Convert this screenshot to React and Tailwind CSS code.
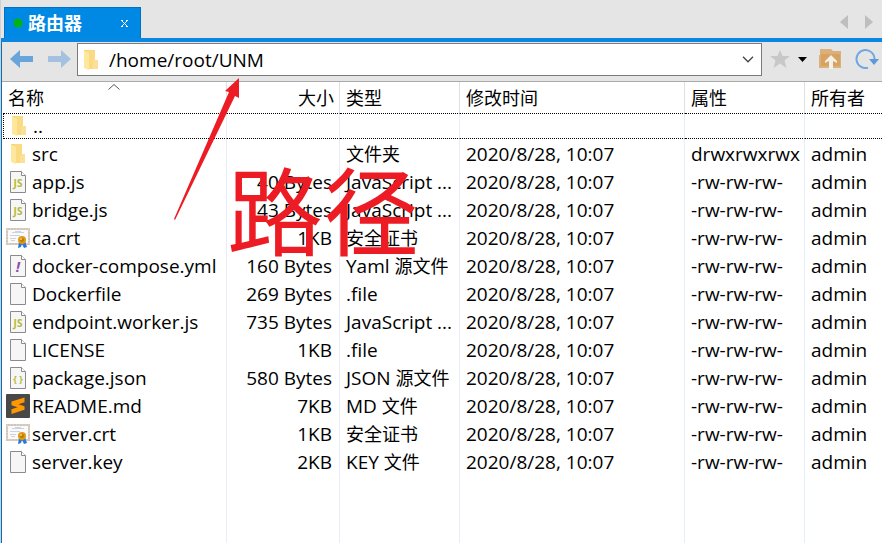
import React from "react";

function FolderIcon() {
  return (
    <svg width="16" height="20" viewBox="0 0 16 20" aria-hidden="true">
      <path d="M1 0h11v18H1z" fill="#f5d067" />
      <path d="M4 0h8v10h3v9H4z" fill="#fadb84" />
      <path d="M1 0l5 3v17l-5-2z" fill="#ffe79e" />
      <path d="M10 11l2-1h3v9h-5z" fill="#fbe197" />
    </svg>
  );
}

function PageIcon({ mark, color }) {
  return (
    <svg width="18" height="22" viewBox="0 0 18 22" aria-hidden="true">
      <path d="M1.500.5h11l4 4v17h-15z" fill="#f6f6f6" stroke="#8b8b8b" />
      <path d="M12.500.5v4h4" fill="#fff" stroke="#8b8b8b" />
      {mark && (
        <text
          x="9"
          y={mark === "!" ? 17 : mark === "JS" ? 16 : 15}
          textAnchor="middle"
          fill={color}
          fontSize={mark === "!" ? 15 : mark === "JS" ? 10 : 9}
          fontWeight="700"
          fontStyle={mark === "!" ? "italic" : "normal"}
          fontFamily="Open Sans, sans-serif"
        >
          {mark}
        </text>
      )}
    </svg>
  );
}

function CertIcon() {
  return (
    <svg width="24" height="22" viewBox="0 0 24 22" aria-hidden="true">
      <path d="M1 2h22v15H1z" fill="#fafafa" stroke="#d3c6b6" strokeWidth="2" />
      <path d="M1 2h22v15H1z" fill="none" stroke="#e8e0d6" strokeWidth="1" strokeDasharray="1 2" />
      <path d="M6 5.500h12M9 4.500h6" stroke="#c5d4e6" />
      <path d="M4 8.500h10M4 11.500h6M5 13.500h4" stroke="#cfd2da" />
      <path d="M13 15l-1 6 3-1 1-3 2 4 3-1-2-6z" fill="#2778d8" />
      <circle cx="16" cy="13" r="4" fill="#e09a12" />
      <circle cx="16" cy="13" r="2" fill="#b97a12" />
      <circle cx="15" cy="12" r="1" fill="#f8cf62" />
    </svg>
  );
}

function SublimeIcon() {
  return (
    <svg width="24" height="24" viewBox="0 0 24 24" aria-hidden="true">
      <rect width="24" height="24" rx="1" fill="#484848" />
      <path d="M5.500 7.500l13-4v4.700l-6 2 6 2v3.600l-13 4.200v-4.800l6-1.900-6-2z" fill="#ff9800" />
    </svg>
  );
}

const icons = {
  folder: <FolderIcon />,
  js: <PageIcon mark="JS" color="#b7b933" />,
  yml: <PageIcon mark="!" color="#8a53a6" />,
  json: <PageIcon mark="{ }" color="#b7b933" />,
  file: <PageIcon />,
  cert: <CertIcon />,
  md: <SublimeIcon />,
};

const time = "2020/8/28, 10:07";
const rw = "-rw-rw-rw-";
const files = [
  ["folder", "src", "", "", "文件夹", "drwxrwxrwx"],
  ["js", "app.js", "40 Bytes", "JavaScript ...", "", rw],
  ["js", "bridge.js", "43 Bytes", "JavaScript ...", "", rw],
  ["cert", "ca.crt", "1KB", "", "安全证书", rw],
  ["yml", "docker-compose.yml", "160 Bytes", "Yaml ", "源文件", rw],
  ["file", "Dockerfile", "269 Bytes", ".file", "", rw],
  ["js", "endpoint.worker.js", "735 Bytes", "JavaScript ...", "", rw],
  ["file", "LICENSE", "1KB", ".file", "", rw],
  ["json", "package.json", "580 Bytes", "JSON ", "源文件", rw],
  ["md", "README.md", "7KB", "MD ", "文件", rw],
  ["cert", "server.crt", "1KB", "", "安全证书", rw],
  ["file", "server.key", "2KB", "KEY ", "文件", rw],
];

const line = "border-r border-[#e6eefb]";
const cell = "border-r border-[#e6eefb] pl-[6px] whitespace-nowrap";
const head = "border-r border-[#e0e0e0] pl-[6px] font-normal text-left text-[18px]";

function Name({ icon, children }) {
  return (
    <div className="flex items-center">
      <span className="flex w-[29px] shrink-0 justify-center pr-[2px] pl-[3px]">{icons[icon]}</span>
      {children}
    </div>
  );
}

function TabBar() {
  return (
    <div className="flex h-[42px] items-end justify-between border-b-4 border-[#0a87e2] bg-[#e5e5e5] pl-[3px]">
      <div className="flex h-[31px] w-[137px] items-center border border-b-0 border-[#0072c6] bg-[#0089e4] pl-[8px] text-white">
        <svg className="shrink-0" width="10" height="10" viewBox="0 0 10 10" aria-hidden="true">
          <circle cx="5" cy="5" r="4.500" fill="#00b414" />
        </svg>
        <button className="ml-[5px] text-[18px] leading-6 font-bold">路由器</button>
        <button aria-label="关闭" className="mr-[12px] ml-auto">
          <svg width="7" height="7" viewBox="0 0 7 7">
            <path d="M0 .5h2M5 .5h2M0 6.500h2M5 6.500h2M1 1l5 5M6 1L1 6" stroke="#fff" fill="none" />
          </svg>
        </button>
      </div>
      <div className="flex gap-4 pr-[9px] pb-[9px]">
        <button aria-label="上一个">
          <svg width="9" height="14" viewBox="0 0 9 14"><path d="M9 0v14L1 7z" fill="#bebebe" /></svg>
        </button>
        <button aria-label="下一个">
          <svg width="9" height="14" viewBox="0 0 9 14"><path d="M1 0v14l8-7z" fill="#bebebe" /></svg>
        </button>
      </div>
    </div>
  );
}

function Toolbar() {
  return (
    <div className="flex h-10 items-start border-b border-[#aaa] bg-[#e5e5e5] pt-px pr-[3px] pl-[8px]">
      <button aria-label="后退" className="flex h-8 items-center">
        <svg width="23" height="18" viewBox="0 0 23 18"><path d="M0 9l10-9v6h13v6H10v6z" fill="#68a5da" /></svg>
      </button>
      <button aria-label="前进" className="ml-[15px] flex h-8 items-center">
        <svg width="23" height="18" viewBox="0 0 23 18"><path d="M23 9L13 0v6H0v6h13v6z" fill="#a4c2e0" /></svg>
      </button>
      <div className="ml-[6px] flex h-[33px] min-w-0 flex-1 items-center border border-[#7a7a7a] bg-white pl-[5px]">
        <FolderIcon />
        <input aria-label="路径" defaultValue="/home/root/UNM" className="ml-[10px] min-w-0 flex-1 outline-none" />
        <button aria-label="历史" className="mr-[7px]">
          <svg width="12" height="7" viewBox="0 0 12 7"><path d="M1 .8l5 5 5-5" stroke="#444" strokeWidth="1.300" fill="none" /></svg>
        </button>
      </div>
      <div className="flex h-8 items-center pl-[8px]">
        <button aria-label="收藏">
          <svg width="20" height="18" viewBox="0 0 20 18"><path d="M10 0l2.600 6H20l-5.500 4.500L16.500 18 10 13.500 3.500 18l2-7.500L0 6h7.400z" fill="#c8c8c8" /></svg>
        </button>
        <button aria-label="收藏列表" className="ml-[8px]">
          <svg width="9" height="5" viewBox="0 0 9 5"><path d="M0 0h9L4.500 5z" fill="#000" /></svg>
        </button>
        <button aria-label="上级目录" className="ml-[12px]">
          <svg width="23" height="20" viewBox="0 0 23 20">
            <path d="M1 0h11l2 2h8v17H0V6h1z" fill="#dcb07a" />
            <path d="M2 5h19v12H2z" fill="#d8a260" />
            <path d="M12 6l6 6v2l-4-2v8h-4v-8l-4 2v-2z" fill="#f3efe9" />
          </svg>
        </button>
        <button aria-label="刷新" className="ml-[13px]">
          <svg width="24" height="21" viewBox="0 0 24 21">
            <path d="M13 18.700A9 9 0 1 1 19.500 10" stroke="#6fa9e0" strokeWidth="2" fill="none" />
            <path d="M14 10h10l-5 6z" fill="#5a9ad8" />
          </svg>
        </button>
      </div>
    </div>
  );
}

function FileTable() {
  return (
    <table className="h-full w-full table-fixed border-separate border-spacing-0">
      <colgroup>
        <col className="w-[224px]" />
        <col className="w-[113px]" />
        <col className="w-[120px]" />
        <col className="w-[225px]" />
        <col className="w-[120px]" />
        <col />
      </colgroup>
      <thead>
        <tr className="h-[31px]">
          <th className="relative border-r border-[#e0e0e0] pl-[5px] text-left text-[18px] font-normal">
            名称
            <svg className="absolute top-px left-[105px]" width="12" height="7" viewBox="0 0 12 7" aria-hidden="true">
              <path d="M.5 6.500l5.500-5 5.500 5" stroke="#555" fill="none" />
            </svg>
          </th>
          <th className="border-r border-[#e0e0e0] pr-[5px] text-right text-[18px] font-normal">大小</th>
          <th className={head}>类型</th>
          <th className={head}>修改时间</th>
          <th className={head}>属性</th>
          <th className="pl-[6px] text-left text-[18px] font-normal">所有者</th>
        </tr>
      </thead>
      <tbody>
        <tr className="h-[26px]">
          <td className="border border-dotted border-black border-r-[#e6eefb] [border-right-style:solid]"><Name icon="folder">..</Name></td>
          {[1, 2, 3, 4].map((n) => (
            <td key={n} className="border-y border-r border-dotted border-black border-r-[#e6eefb] [border-right-style:solid]" />
          ))}
          <td className="border-y border-dotted border-black" />
        </tr>
        {files.map(([icon, name, size, kind, kindZh, mode], i) => (
          <tr key={name} className={i === 0 ? "h-[29px]" : "h-7"}>
            <td className={line + " whitespace-nowrap"}><Name icon={icon}>{name}</Name></td>
            <td className={line + " pr-[7px] text-right whitespace-nowrap"}>{size}</td>
            <td className={cell}>{kind}<span className="text-[18px]">{kindZh}</span></td>
            <td className={cell}>{time}</td>
            <td className={cell}>{mode}</td>
            <td className="pl-[6px]">admin</td>
          </tr>
        ))}
        <tr>
          {[1, 2, 3, 4, 5].map((n) => (
            <td key={n} className={line} />
          ))}
          <td />
        </tr>
      </tbody>
    </table>
  );
}

export default function App() {
  return (
    <div className='relative flex h-screen flex-col overflow-hidden border-l border-[#d0d0d0] bg-white font-["Open_Sans","Noto_Sans_CJK_SC",sans-serif] text-[19px] leading-[24px] text-black'>
      <TabBar />
      <div className="flex min-h-0 flex-1 flex-col border-l border-[#0072c6]">
        <Toolbar />
        <div className="min-h-0 flex-1 pl-px">
          <FileTable />
        </div>
      </div>
      <svg className="absolute top-[77px] left-[172px]" width="68" height="144" viewBox="0 0 68 144" aria-hidden="true">
        <path d="M66 1L52 14l4 1L1 142l1 1L62 19l4 2z" fill="#ed1c24" />
      </svg>
      <div className="absolute top-[163px] left-[226px] text-[96px] leading-[96px] text-[#ed1c24]">路径</div>
    </div>
  );
}
